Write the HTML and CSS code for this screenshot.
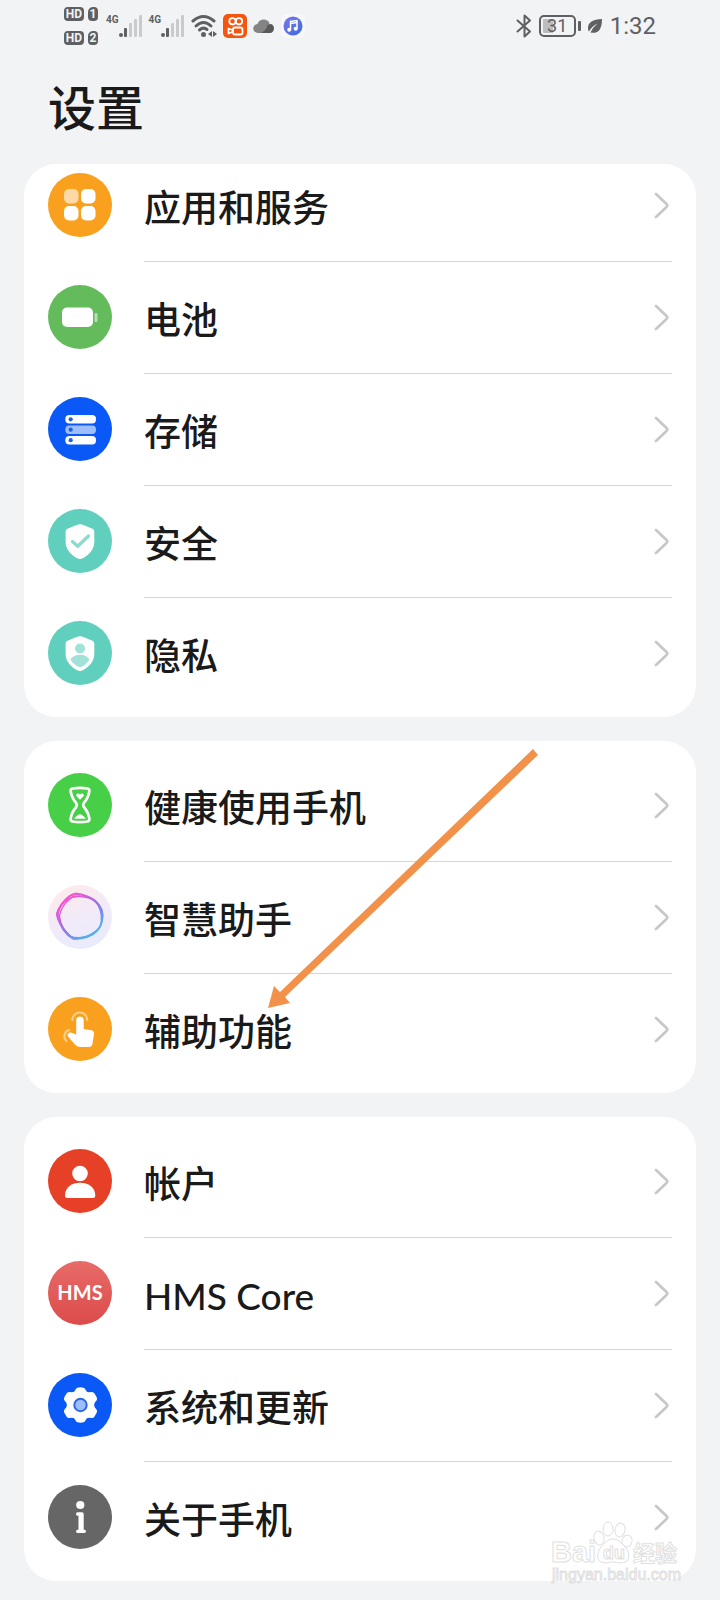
FILE: index.html
```html
<!DOCTYPE html>
<html lang="zh-CN">
<head>
  <meta charset="UTF-8">
  <meta name="viewport" content="width=device-width, initial-scale=1.0">
  <title>设置</title>
  <link rel="stylesheet" href="styles.css">
</head>
<body>
  <!-- shapes used more than once -->
  <svg class="defs" width="0" height="0" aria-hidden="true">
    <symbol id="chevron" viewBox="0 0 16 28">
      <path d="M3 2 L13.500 12 Q15 13.500 13.500 15 L3 25" fill="none" stroke="#c8c8c8" stroke-width="2.700" stroke-linecap="round"/>
    </symbol>
    <symbol id="signal" viewBox="0 0 24 24">
      <g fill="#5f6062">
        <rect x="0" y="19" width="4" height="4" rx="2"/>
        <rect x="5" y="14" width="3" height="9" rx="1"/>
      </g>
      <g fill="#c9cacb">
        <rect x="10" y="9" width="3" height="14" rx="1"/>
        <rect x="15" y="5" width="3" height="18" rx="1"/>
        <rect x="20" y="1" width="3" height="22" rx="1"/>
      </g>
    </symbol>
    <symbol id="shield" viewBox="0 0 64 64">
      <path d="M32 15 C33 15 43 19 44.500 19.700 Q46.300 20.500 46.300 22.500 V33 C46.300 41 39.500 47.500 33.500 49.700 Q32 50.300 30.500 49.700 C24.500 47.500 17.600 41 17.600 33 V22.500 Q17.600 20.500 19.500 19.700 C21 19 31 15 32 15 Z" fill="#fff"/>
    </symbol>
  </svg>

  <header class="status-bar">
    <div class="status-left">
      <div class="sims">
        <div class="sim"><span class="hd">HD</span><span class="slot">1</span></div>
        <div class="sim"><span class="hd">HD</span><span class="slot">2</span></div>
      </div>
      <div class="network"><span>4G</span><svg width="24" height="24"><use href="#signal"/></svg></div>
      <div class="network"><span>4G</span><svg width="24" height="24"><use href="#signal"/></svg></div>
      <svg width="26" height="24" viewBox="0 0 26 24">
        <g fill="none" stroke="#5f6062" stroke-width="3" stroke-linecap="round">
          <path d="M2 7 Q12.500 -2 23 7"/>
          <path d="M5 12 Q12.500 5 20 12"/>
          <path d="M8.500 16 Q12.500 12.500 16 15.500"/>
        </g>
        <circle cx="12.500" cy="20.500" r="2.500" fill="#5f6062"/>
        <path d="M17 20 l4 -3 v6 z M22 17 l4 3 l-4 3 z" fill="#5f6062"/>
      </svg>
      <svg width="24" height="24" viewBox="0 0 24 24">
        <rect width="24" height="24" rx="5" fill="#f4560f"/>
        <g fill="none" stroke="#fff" stroke-width="1.800">
          <circle cx="9.500" cy="7.300" r="3.200"/>
          <circle cx="16" cy="7.300" r="3.200"/>
          <rect x="10" y="13.500" width="9.500" height="7" rx="2"/>
          <path d="M9.500 16 L5.500 14.500 V19.500 L9.500 18 Z" stroke-linejoin="round"/>
        </g>
      </svg>
      <svg class="cloud" width="22" height="24" viewBox="0 0 22 24">
        <path d="M5 19 A4.500 4.500 0 0 1 4.500 10 A6.500 6.500 0 0 1 16.500 9 L13 19 Z" fill="#848484"/>
        <path d="M14.500 11 A6 6 0 0 1 18 10 A4.700 4.700 0 0 1 17 19 H8 Q13 17 14.500 11 Z" fill="#5a5a5a"/>
      </svg>
      <svg width="24" height="24" viewBox="0 0 24 24">
        <defs>
          <linearGradient id="music" x1="0" y1="0" x2="1" y2="1">
            <stop offset="0" stop-color="#7d78e8"/>
            <stop offset="1" stop-color="#3a6be0"/>
          </linearGradient>
        </defs>
        <rect width="24" height="24" rx="6" fill="#f8f8fb"/>
        <circle cx="12" cy="12" r="9.500" fill="url(#music)"/>
        <path d="M9.500 15.500 V7.500 L16 6.500 V14.500 M9.500 9.500 L16 8.500" fill="none" stroke="#fff" stroke-width="1.500"/>
        <circle cx="8.200" cy="15.700" r="2" fill="#fff"/>
        <circle cx="14.700" cy="14.700" r="2" fill="#fff"/>
      </svg>
    </div>
    <div class="status-right">
      <svg width="16" height="24" viewBox="0 0 16 24">
        <path d="M1.500 6.500 L14 17.500 L8.500 22.500 V1.500 L14 6.500 L1.500 17.500" fill="none" stroke="#5f6062" stroke-width="2" stroke-linejoin="round" stroke-linecap="round"/>
      </svg>
      <div class="battery"><span class="battery-level">31</span></div>
      <svg width="16" height="16" viewBox="0 0 16 16">
        <path d="M15 1 C6 1.500 1 4 1 10 C1 11.500 1.500 13 2 13.500 Q5 8 10.500 5.500 Q6 9 3.500 14.500 C10 16 15 13 15 1 Z" fill="#5f6062"/>
      </svg>
      <time class="clock">1:32</time>
    </div>
  </header>

  <h1 class="title">设置</h1>

  <main class="cards">
    <ul class="card card-scrolled">
      <li><a class="row" href="#">
        <svg class="icon" viewBox="0 0 64 64">
          <circle cx="32" cy="32" r="32" fill="#f9a11f"/>
          <rect x="16" y="16" width="14.500" height="14.500" rx="5" fill="#fdd9a5"/>
          <rect x="33" y="16" width="14.500" height="14.500" rx="5" fill="#fff"/>
          <rect x="16" y="33" width="14.500" height="14.500" rx="5" fill="#fff"/>
          <rect x="33" y="33" width="14.500" height="14.500" rx="5" fill="#fff"/>
        </svg>
        <span class="row-body"><span class="label">应用和服务</span><svg class="chevron"><use href="#chevron"/></svg></span>
      </a></li>
      <li><a class="row" href="#">
        <svg class="icon" viewBox="0 0 64 64">
          <circle cx="32" cy="32" r="32" fill="#64bb5c"/>
          <rect x="14" y="22.500" width="31" height="19.500" rx="5" fill="#fff"/>
          <rect x="46.500" y="28" width="3" height="9" rx="1.200" fill="#b5deb1"/>
        </svg>
        <span class="row-body"><span class="label">电池</span><svg class="chevron"><use href="#chevron"/></svg></span>
      </a></li>
      <li><a class="row" href="#">
        <svg class="icon" viewBox="0 0 64 64">
          <circle cx="32" cy="32" r="32" fill="#0a59f7"/>
          <rect x="17.300" y="18" width="30.700" height="8.500" rx="4" fill="#fff"/>
          <rect x="17.300" y="28.500" width="30.700" height="8.500" rx="4" fill="#9dbdfc"/>
          <rect x="17.300" y="39" width="30.700" height="8.500" rx="4" fill="#fff"/>
          <g fill="#1f5fe0">
            <circle cx="22.700" cy="22.300" r="2.100"/>
            <circle cx="22.700" cy="32.700" r="2.100"/>
            <circle cx="22.700" cy="43.200" r="2.100"/>
          </g>
        </svg>
        <span class="row-body"><span class="label">存储</span><svg class="chevron"><use href="#chevron"/></svg></span>
      </a></li>
      <li><a class="row" href="#">
        <svg class="icon" viewBox="0 0 64 64">
          <circle cx="32" cy="32" r="32" fill="#61cfbe"/>
          <use href="#shield"/>
          <path d="M24.500 32.500 L29.700 37.300 L40.500 27" fill="none" stroke="#8bdccf" stroke-width="3.300" stroke-linecap="round" stroke-linejoin="round"/>
        </svg>
        <span class="row-body"><span class="label">安全</span><svg class="chevron"><use href="#chevron"/></svg></span>
      </a></li>
      <li><a class="row" href="#">
        <svg class="icon" viewBox="0 0 64 64">
          <circle cx="32" cy="32" r="32" fill="#61cfbe"/>
          <use href="#shield"/>
          <circle cx="32" cy="27.500" r="5" fill="#a0e2d8"/>
          <path d="M22.300 38.500 Q25.500 33.700 32 33.700 Q38.500 33.700 41.500 38.500 Q38.500 43.500 32 46.500 Q25.500 43.500 22.300 38.500 Z" fill="#a0e2d8"/>
        </svg>
        <span class="row-body"><span class="label">隐私</span><svg class="chevron"><use href="#chevron"/></svg></span>
      </a></li>
    </ul>

    <ul class="card">
      <li><a class="row" href="#">
        <svg class="icon" viewBox="0 0 64 64">
          <circle cx="32" cy="32" r="32" fill="#47cf47"/>
          <path d="M24.500 15.500 Q32 14.300 39.500 15.500 Q41.700 15.900 41.300 18.500 Q40.300 25 35.800 30 Q34.500 32 35.800 34 Q40.300 39 41.300 45.500 Q41.700 48.100 39.500 48.500 Q32 49.700 24.500 48.500 Q22.300 48.100 22.700 45.500 Q23.700 39 28.200 34 Q29.500 32 28.200 30 Q23.700 25 22.700 18.500 Q22.300 15.900 24.500 15.500 Z" fill="none" stroke="#fff" stroke-width="2.700"/>
          <path d="M32 26.700 L28.700 23.500 Q27.300 21.700 29 20.700 Q30.800 20 32 21.700 Q33.200 20 35 20.700 Q36.700 21.700 35.300 23.500 Z" fill="#fff"/>
          <path d="M26 45.700 Q27.500 43 32 41 Q36.500 43 38 45.700 Z" fill="#fff"/>
        </svg>
        <span class="row-body"><span class="label">健康使用手机</span><svg class="chevron"><use href="#chevron"/></svg></span>
      </a></li>
      <li><a class="row" href="#">
        <svg class="icon" viewBox="0 0 64 64">
          <defs>
            <linearGradient id="halo" x1="0.200" y1="0" x2="0.600" y2="1">
              <stop offset="0" stop-color="#fdebe8"/>
              <stop offset="0.500" stop-color="#f3eaf8"/>
              <stop offset="1" stop-color="#e8ebfd"/>
            </linearGradient>
            <linearGradient id="ring" gradientUnits="userSpaceOnUse" x1="20" y1="14" x2="46" y2="48">
              <stop offset="0" stop-color="#f03ac8"/>
              <stop offset="0.500" stop-color="#8b5ce6"/>
              <stop offset="1" stop-color="#36a6f0"/>
            </linearGradient>
          </defs>
          <circle cx="32" cy="32" r="32" fill="url(#halo)"/>
          <g fill="none" stroke="url(#ring)" stroke-width="1.300" opacity="0.850">
            <path d="M27 8.500 C33 8 47 13 51 20 C58 29 54 40 49 46 C43 53 32 54 25 54 C18 50 12 42 9.500 31 C8 22 20 10 27 8.500 Z"/>
            <path d="M23 10.500 C32 8 45 12 49.500 18 C56 25 56 34 51 43 C45 51 35 55 25 53 C15 46 11 38 10 29 C12 20 18 13 23 10.500 Z"/>
            <path d="M30 11 C39 10.500 47 14 51.500 21 C55 30 56 38 49 46 C41 53 29 54 22 51 C15 44 9 36 8.500 29 C12 18 22 11 30 11 Z"/>
            <path d="M25 12 C36 10.500 43 12 48.500 18 C54 25 54.500 36 52 42 C45 51 34 52.500 27 54 C17 49 12 39 11.500 30 C14 21 19 15 25 12 Z"/>
          </g>
        </svg>
        <span class="row-body"><span class="label">智慧助手</span><svg class="chevron"><use href="#chevron"/></svg></span>
      </a></li>
      <li><a class="row" href="#">
        <svg class="icon" viewBox="0 0 64 64">
          <circle cx="32" cy="32" r="32" fill="#f9a11f"/>
          <g fill="none" stroke="#fdd08a" stroke-width="2" stroke-linecap="round">
            <path d="M24.300 23 A7.500 7.500 0 0 1 39.300 23"/>
            <path d="M21 33 A6.500 6.500 0 0 0 18.500 44"/>
          </g>
          <path d="M28.200 23.300 Q28.200 19.500 32 19.500 Q35.700 19.500 35.700 23.300 V32 L43.500 33.300 Q46.300 34 46 37 L44.500 46.500 Q44 50 40.500 50 H32 Q29.500 50 27.500 48 L20 39.500 Q18.700 37.500 20.300 36 Q21.500 35 23.500 35.700 L28.200 37.500 Z" fill="#fff"/>
        </svg>
        <span class="row-body"><span class="label">辅助功能</span><svg class="chevron"><use href="#chevron"/></svg></span>
      </a></li>
      <li class="pointer" aria-hidden="true">
        <svg width="272" height="260" viewBox="0 0 272 260">
          <path d="M265 0 L270 6 L17 248 L22 254 L0 259 L6 237 L12 243 Z" fill="#f2924a"/>
        </svg>
      </li>
    </ul>

    <ul class="card">
      <li><a class="row" href="#">
        <svg class="icon" viewBox="0 0 64 64">
          <circle cx="32" cy="32" r="32" fill="#e64127"/>
          <circle cx="32" cy="24.500" r="7.800" fill="#fff"/>
          <path d="M17 46.500 C17 38 24 33.700 32 33.700 C40 33.700 47.300 38 47.300 46.500 Q47.300 49 44.500 49 H19.500 Q17 49 17 46.500 Z" fill="#fff"/>
        </svg>
        <span class="row-body"><span class="label">帐户</span><svg class="chevron"><use href="#chevron"/></svg></span>
      </a></li>
      <li><a class="row" href="#">
        <svg class="icon" viewBox="0 0 64 64">
          <defs>
            <linearGradient id="hms" x1="0" y1="0" x2="0" y2="1">
              <stop offset="0" stop-color="#e76b68"/>
              <stop offset="1" stop-color="#db4b4a"/>
            </linearGradient>
          </defs>
          <circle cx="32" cy="32" r="32" fill="url(#hms)"/>
          <text class="hms-text" x="32" y="39" text-anchor="middle">HMS</text>
        </svg>
        <span class="row-body"><span class="label">HMS Core</span><svg class="chevron"><use href="#chevron"/></svg></span>
      </a></li>
      <li><a class="row" href="#">
        <svg class="icon" viewBox="0 0 64 64">
          <circle cx="32" cy="32" r="32" fill="#0a59f7"/>
          <path d="M29.500 14.700 Q32.500 13.900 35.500 14.700 Q37 15.200 37.700 17 Q38.500 19.300 41 19.300 L43.500 19 Q45.500 18.800 46.500 20.500 L48.700 24.300 Q49.500 26 48.500 27.500 L46.800 29.500 Q45.300 32 46.800 34.500 L48.500 36.500 Q49.500 38 48.700 39.700 L46.500 43.500 Q45.500 45.200 43.500 45 L41 44.700 Q38.500 44.700 37.700 47 Q37 48.800 35.500 49.300 Q32.500 50.100 29.500 49.300 Q28 48.800 27.300 47 Q26.500 44.700 24 44.700 L21.500 45 Q19.500 45.200 18.500 43.500 L16.300 39.700 Q15.500 38 16.500 36.500 L18.200 34.500 Q19.700 32 18.200 29.500 L16.500 27.500 Q15.500 26 16.300 24.300 L18.500 20.500 Q19.500 18.800 21.500 19 L24 19.300 Q26.500 19.300 27.300 17 Q28 15.200 29.500 14.700 Z" fill="#fff"/>
          <circle cx="32.500" cy="32" r="6.200" fill="#9dbdfc" stroke="#2a68e4" stroke-width="2"/>
        </svg>
        <span class="row-body"><span class="label">系统和更新</span><svg class="chevron"><use href="#chevron"/></svg></span>
      </a></li>
      <li><a class="row" href="#">
        <svg class="icon" viewBox="0 0 64 64">
          <circle cx="32" cy="32" r="32" fill="#666"/>
          <circle cx="32.300" cy="20" r="4.100" fill="#fff"/>
          <path d="M29.500 27.300 H34 Q35.700 27.300 35.700 29 V44.700 H36.500 Q38 44.700 38 46.300 Q38 48 36.500 48 H29.500 Q28 48 28 46.300 Q28 44.700 29.500 44.700 H30.500 V30.700 H29.500 Q28 30.700 28 29 Q28 27.300 29.500 27.300 Z" fill="#fff"/>
        </svg>
        <span class="row-body"><span class="label">关于手机</span><svg class="chevron"><use href="#chevron"/></svg></span>
      </a></li>
    </ul>

    <svg class="watermark" width="134" height="66" viewBox="0 0 134 66">
      <g fill="#fff" stroke="#dfdfdf" stroke-width="1">
        <text class="mark-latin" x="1" y="42">Bai</text>
        <ellipse cx="49" cy="18" rx="5" ry="7" transform="rotate(-12 49 18)"/>
        <ellipse cx="58" cy="9" rx="5" ry="7"/>
        <ellipse cx="70" cy="10" rx="5" ry="7" transform="rotate(12 70 10)"/>
        <ellipse cx="77" cy="21" rx="5" ry="6" transform="rotate(20 77 21)"/>
        <path d="M63 19 C69 19 72 24 75 27 C80 32 80 40 75 42 C71 44 67 42 63 42 C59 42 55 44 51 42 C46 40 47 32 51 27 C54 24 57 19 63 19 Z"/>
        <text class="mark-du" x="53" y="39">du</text>
        <text class="mark-cjk" x="83" y="41">经验</text>
        <text class="mark-url" x="2" y="60">jingyan.baidu.com</text>
      </g>
    </svg>
  </main>
</body>
</html>
```

FILE: styles.css
```css
* {
  box-sizing: border-box;
}

body {
  margin: 0;
  background-color: #f1f3f5;
  color: #1a1a1a;
  font-family: Lato, "Noto Sans CJK SC", sans-serif;
}

.defs {
  position: absolute;
}

svg {
  display: block;
  flex-shrink: 0;
}

/* status bar */
.status-bar {
  display: flex;
  justify-content: space-between;
  align-items: center;
  height: 52px;
  padding: 0 64px;
  color: #5f6062;
}

.status-left,
.status-right {
  display: flex;
  align-items: center;
  gap: 6px;
}

.sims {
  display: flex;
  flex-direction: column;
  gap: 10px;
  margin-right: 2px;
}

.sim {
  display: flex;
  gap: 4px;
}

.hd,
.slot {
  height: 14px;
  border-radius: 4px;
  background-color: #5f6062;
  color: #f1f3f5;
  font: bold 12px/14px Roboto, sans-serif;
  text-align: center;
}

.hd {
  width: 20px;
}

.slot {
  width: 10px;
  border-top-left-radius: 5px;
}

.network {
  display: flex;
  align-items: center;
}

.network span {
  align-self: flex-start;
  font: bold 10px/12px Roboto, sans-serif;
}

.status-right {
  gap: 7px;
}

.battery {
  position: relative;
  width: 37px;
  height: 22px;
  margin-right: 4px;
  border: 2px solid #5f6062;
  border-radius: 5px;
  background: linear-gradient(90deg, #bcbdbe 12px, transparent 12px);
  background-clip: content-box;
  padding: 2px;
}

/* battery tip */
.battery::after {
  content: "";
  position: absolute;
  top: 4px;
  right: -7px;
  width: 3px;
  height: 10px;
  border-radius: 1px;
  background-color: #5f6062;
}

.battery-level {
  display: block;
  font: 18px/14px Roboto, sans-serif;
  text-align: center;
}

.clock {
  font: 24px/32px Roboto, sans-serif;
}

.title {
  margin: 0;
  padding: 22px 48px;
  font-size: 48px;
  line-height: 68px;
  font-weight: 500;
}

/* cards */
.cards {
  position: relative;
  display: flex;
  flex-direction: column;
  gap: 24px;
  padding: 0 24px 19px;
}

.card {
  position: relative;
  overflow: hidden;
  margin: 0;
  padding: 8px 0;
  list-style: none;
  background-color: #fff;
  border-radius: 32px;
}

/* the list is scrolled a little under the title */
.card-scrolled {
  padding-top: 0;
}

.card-scrolled li:first-child {
  margin-top: -15px;
}

.row {
  display: flex;
  align-items: center;
  gap: 32px;
  padding: 0 24px;
  color: inherit;
  text-decoration: none;
}

.icon {
  width: 64px;
  height: 64px;
}

.row-body {
  display: flex;
  flex: 1;
  align-items: center;
  justify-content: space-between;
  height: 112px;
  padding-right: 3px;
  border-top: 1px solid transparent;
}

li + li .row-body {
  border-top-color: #d5d5d5;
}

.label {
  padding-top: 4px;
  font-size: 37px;
  line-height: 48px;
  font-weight: 500;
}

.chevron {
  width: 16px;
  height: 28px;
}

.hms-text {
  fill: #fff;
  font: bold 20px Lato, sans-serif;
}

/* orange arrow over the second card */
.pointer {
  position: absolute;
  top: 8px;
  left: 244px;
}

.watermark {
  position: absolute;
  right: 36px;
  bottom: 14px;
}

.mark-latin {
  font: bold 29px "Liberation Sans", sans-serif;
}

.mark-du {
  font: bold 18px "Liberation Sans", sans-serif;
}

.mark-cjk {
  font: bold 22px "Noto Sans CJK SC", sans-serif;
}

.mark-url {
  font: 16px "Liberation Sans", sans-serif;
}
```
